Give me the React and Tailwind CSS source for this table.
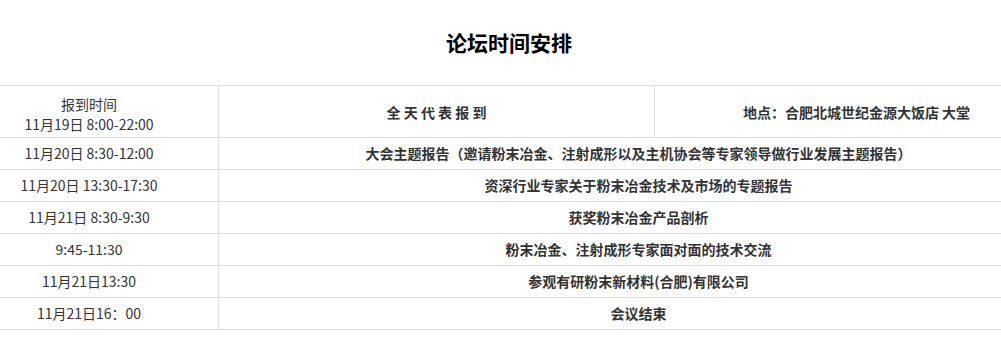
import React from 'react';

const rows = [
  { time: '11月20日 8:30-12:00', text: '大会主题报告（邀请粉末冶金、注射成形以及主机协会等专家领导做行业发展主题报告）' },
  { time: '11月20日 13:30-17:30', text: '资深行业专家关于粉末冶金技术及市场的专题报告' },
  { time: '11月21日 8:30-9:30', text: '获奖粉末冶金产品剖析' },
  { time: '9:45-11:30', text: '粉末冶金、注射成形专家面对面的技术交流' },
  { time: '11月21日13:30', text: '参观有研粉末新材料(合肥)有限公司' },
  { time: '11月21日16：00', text: '会议结束' },
];

export default function App() {
  return (
    <div className="w-full h-[343px] overflow-hidden bg-white text-[#333] font-['Microsoft_YaHei','Noto_Sans_CJK_SC',sans-serif]">
      <div className="w-[1098px] -ml-10">
        <div className="h-[85px] flex items-center justify-center">
          <h1 className="text-[21px] font-bold text-black leading-none">论坛时间安排</h1>
        </div>
        <div className="border-t border-[#dcdcdc] text-[14px]">
          <div className="flex h-[52px] border-b border-[#dcdcdc]">
            <div className="w-[259px] border-r border-[#dcdcdc] flex flex-col items-center justify-center pt-[5px] leading-[20px]">
              <span>报到时间</span>
              <span>11月19日 8:00-22:00</span>
            </div>
            <div className="w-[436px] border-r border-[#dcdcdc] flex items-center justify-center font-bold pt-[2px]">
              全 天 代 表 报 到
            </div>
            <div className="flex-1 flex items-center justify-center font-bold pt-[2px]">
              地点：合肥北城世纪金源大饭店 大堂
            </div>
          </div>
          {rows.map((r) => (
            <div key={r.time} className="flex h-[32px] border-b border-[#dcdcdc]">
              <div className="w-[259px] border-r border-[#dcdcdc] flex items-center justify-center">
                {r.time}
              </div>
              <div className="flex-1 flex items-center justify-center font-bold">
                {r.text}
              </div>
            </div>
          ))}
        </div>
      </div>
    </div>
  );
}
